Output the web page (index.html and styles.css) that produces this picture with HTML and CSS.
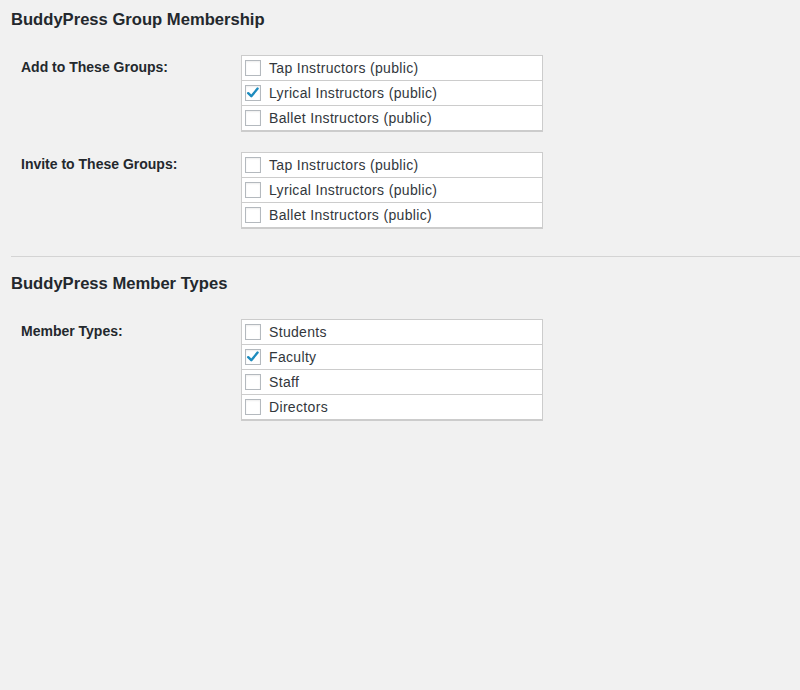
FILE: index.html
```html
<!DOCTYPE html>
<html>
<head>
<meta charset="utf-8">
<link rel="stylesheet" href="styles.css">
</head>
<body>
<div class="wrap">
  <h2 class="title">BuddyPress Group Membership</h2>
  <div class="field first">
    <div class="label">Add to These Groups:</div>
    <div class="box">
      <label class="row"><span class="cb"></span>Tap Instructors (public)</label>
      <label class="row"><span class="cb checked"><svg viewBox="0 0 16 16" width="16" height="16"><path d="M3.2 8.2 L6.3 11.2 L12.6 3.6" fill="none" stroke="#1e8cbe" stroke-width="2.4" stroke-linecap="round" stroke-linejoin="round"/></svg></span>Lyrical Instructors (public)</label>
      <label class="row"><span class="cb"></span>Ballet Instructors (public)</label>
    </div>
  </div>
  <div class="field">
    <div class="label">Invite to These Groups:</div>
    <div class="box">
      <label class="row"><span class="cb"></span>Tap Instructors (public)</label>
      <label class="row"><span class="cb"></span>Lyrical Instructors (public)</label>
      <label class="row"><span class="cb"></span>Ballet Instructors (public)</label>
    </div>
  </div>
  <hr class="sep">
  <h2 class="title second">BuddyPress Member Types</h2>
  <div class="field first">
    <div class="label">Member Types:</div>
    <div class="box">
      <label class="row"><span class="cb"></span>Students</label>
      <label class="row"><span class="cb checked"><svg viewBox="0 0 16 16" width="16" height="16"><path d="M3.2 8.2 L6.3 11.2 L12.6 3.6" fill="none" stroke="#1e8cbe" stroke-width="2.4" stroke-linecap="round" stroke-linejoin="round"/></svg></span>Faculty</label>
      <label class="row"><span class="cb"></span>Staff</label>
      <label class="row"><span class="cb"></span>Directors</label>
    </div>
  </div>
</div>
</body>
</html>
```

FILE: styles.css
```css
html, body {
  margin: 0;
  padding: 0;
  background: #f1f1f1;
  height: 100%;
}
body {
  font-family: "Liberation Sans", Arial, sans-serif;
  color: #23282d;
  font-size: 14px;
}
.wrap {
  padding-left: 11px;
}
.title {
  margin: 0;
  padding-top: 8px;
  font-size: 16.6px;
  line-height: 24px;
  font-weight: bold;
}
.title.second {
  padding-top: 15px;
}
.field {
  display: flex;
  margin-top: 20px;
}
.field.first {
  margin-top: 23px;
}
.label {
  width: 220px;
  padding-left: 10px;
  padding-top: 2px;
  font-weight: bold;
  font-size: 14px;
  line-height: 20px;
}
.box {
  width: 300px;
  border: 1px solid #ccc;
  background: #fff;
}
.row {
  display: flex;
  align-items: center;
  height: 24px;
  border-bottom: 1px solid #ccc;
  padding-left: 3px;
  font-size: 14px;
  letter-spacing: 0.33px;
  color: #32373c;
}
.cb {
  width: 14px;
  height: 14px;
  border: 1px solid #b4b9be;
  background: #fff;
  margin-right: 8px;
  position: relative;
  box-shadow: inset 0 1px 2px rgba(0,0,0,0.07);
}
.cb svg {
  position: absolute;
  left: -1px;
  top: -1px;
}
.sep {
  margin: 27px 0 0 0;
  border: 0;
  border-top: 1px solid #d4d4d4;
  height: 0;
}
```
